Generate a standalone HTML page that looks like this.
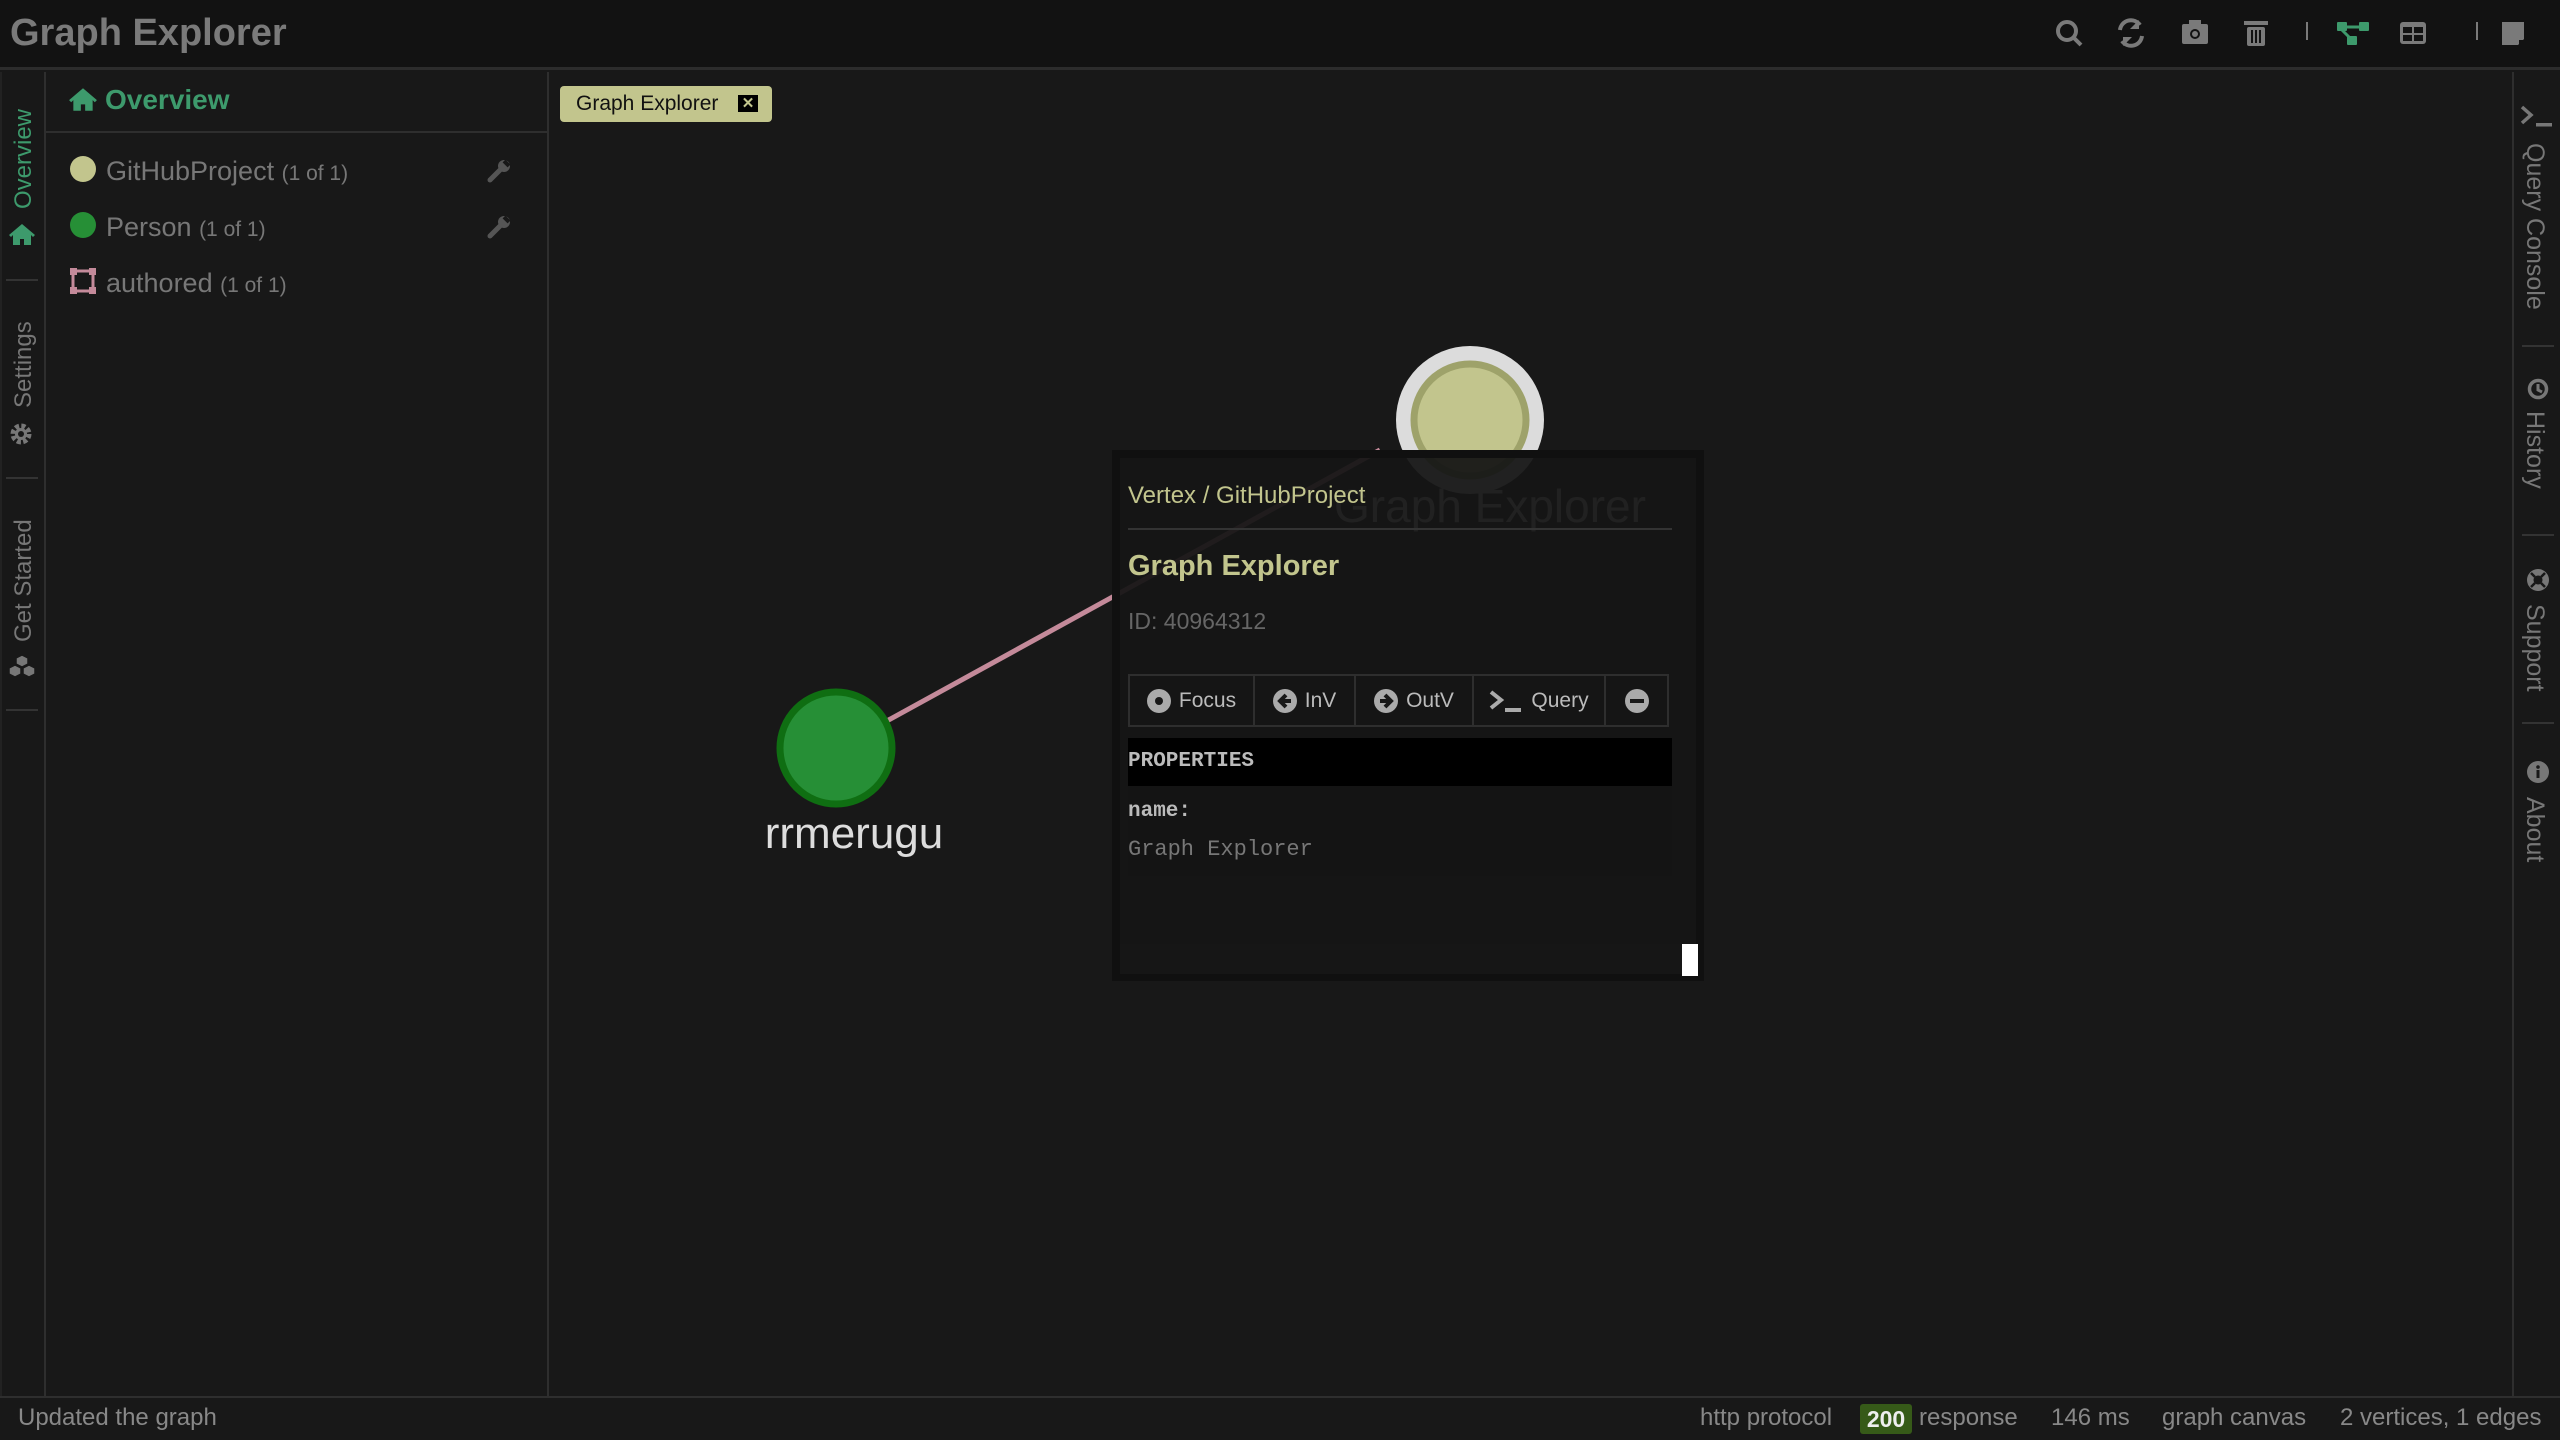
<!DOCTYPE html>
<html><head><meta charset="utf-8"><style>
*{margin:0;padding:0;box-sizing:border-box}
body{width:2560px;height:1440px;background:#181818;font-family:"Liberation Sans",sans-serif;position:relative;overflow:hidden;color:#888}
.a{position:absolute}
.vt{position:absolute;white-space:nowrap;font-size:24px;color:#777}
.vr{font-size:25px}
.btn{position:absolute;top:674px;height:53px;border:2px solid #2e2e2e;color:#bbb;font-size:21px;display:flex;align-items:center;justify-content:center;gap:8px}
.st{position:absolute;top:1404px;font-size:24px;color:#888;white-space:nowrap}
</style></head><body>
<!-- header -->
<div class="a" style="left:0;top:0;width:2560px;height:70px;background:#121212;border-bottom:3px solid #2c2c2c"></div>
<div class="a" style="left:10px;top:12px;font-size:38px;font-weight:bold;color:#7a7a7a">Graph Explorer</div>
<svg class="a" style="left:2050px;top:14px" width="500" height="40" viewBox="2050 14 500 40">
 <g fill="none" stroke="#7a7a7a" stroke-width="4"><circle cx="2067" cy="31" r="9"/><path d="M2074 38l7 7"/></g>
 <g fill="none" stroke="#7a7a7a" stroke-width="4"><path d="M2120 30a11 11 0 0 1 20-5"/><path d="M2142 36a11 11 0 0 1-20 5"/></g>
 <path d="M2139 20v9h-9z M2123 46v-9h9z" fill="#7a7a7a"/>
 <rect x="2182" y="24" width="26" height="20" rx="2" fill="#7a7a7a"/><rect x="2189" y="20" width="12" height="6" fill="#7a7a7a"/><circle cx="2195" cy="34" r="5" fill="#121212"/><circle cx="2195" cy="34" r="3" fill="#7a7a7a"/>
 <rect x="2244" y="21" width="24" height="4" fill="#7a7a7a"/><rect x="2247" y="27" width="18" height="19" rx="2" fill="#7a7a7a"/><path d="M2252 30v13M2256 30v13M2260 30v13" stroke="#121212" stroke-width="2"/>
 <rect x="2306" y="22" width="2" height="18" fill="#7a7a7a"/>
 <rect x="2337" y="22" width="10" height="9" rx="1" fill="#3d9a6c"/><rect x="2359" y="22" width="10" height="9" rx="1" fill="#3d9a6c"/><rect x="2347" y="36" width="10" height="9" rx="1" fill="#3d9a6c"/><path d="M2345 27h15M2342 30l8 8" stroke="#3d9a6c" stroke-width="3"/>
 <rect x="2400" y="22" width="26" height="22" rx="3" fill="#7a7a7a"/><rect x="2403" y="27" width="9" height="6" fill="#121212"/><rect x="2414" y="27" width="9" height="6" fill="#121212"/><rect x="2403" y="35" width="9" height="6" fill="#121212"/><rect x="2414" y="35" width="9" height="6" fill="#121212"/>
 <rect x="2476" y="22" width="2" height="18" fill="#7a7a7a"/>
 <path d="M2502 22h22v17l-6 6h-16z" fill="#7a7a7a"/><path d="M2524 40l-5 5v-5z" fill="#121212"/>
</svg>
<!-- left rail -->
<div class="a" style="left:0;top:72px;width:46px;height:1326px;background:#181818;border-right:2px solid #2e2e2e;border-left:2px solid #222"></div>
<div class="vt" style="left:10px;top:209px;transform:rotate(-90deg);transform-origin:0 0;color:#3d9a6c">Overview</div>
<svg class="a" style="left:8px;top:222px" width="28" height="24" viewBox="0 0 28 24"><path d="M14 2L1 13l2 2 2-2v10h7v-6h4v6h7V13l2 2 2-2z" fill="#3d9a6c"/></svg>
<div class="a" style="left:6px;top:279px;width:32px;height:2px;background:#333"></div>
<div class="vt" style="left:10px;top:408px;transform:rotate(-90deg);transform-origin:0 0">Settings</div>
<svg class="a" style="left:9px;top:422px" width="24" height="24" viewBox="0 0 24 24"><circle cx="12" cy="12" r="8" fill="none" stroke="#777" stroke-width="5" stroke-dasharray="4 2.3"/><circle cx="12" cy="12" r="6" fill="#777"/><circle cx="12" cy="12" r="3" fill="#181818"/></svg>
<div class="a" style="left:6px;top:477px;width:32px;height:2px;background:#333"></div>
<div class="vt" style="left:10px;top:642px;transform:rotate(-90deg);transform-origin:0 0">Get Started</div>
<svg class="a" style="left:8px;top:654px" width="28" height="24" viewBox="0 0 28 24"><g fill="#777" stroke="#181818" stroke-width="1.5"><path d="M14 1l6 3v6l-6 3-6-3V4z"/><path d="M7 11l6 3v6l-6 3-6-3v-6z"/><path d="M21 11l6 3v6l-6 3-6-3v-6z"/></g></svg>
<div class="a" style="left:6px;top:709px;width:32px;height:2px;background:#333"></div>
<!-- overview panel -->
<div class="a" style="left:46px;top:72px;width:503px;height:1326px;background:#181818;border-right:2px solid #2e2e2e"></div>
<div class="a" style="left:46px;top:131px;width:502px;height:2px;background:#2e2e2e"></div>
<svg class="a" style="left:68px;top:86px" width="30" height="26" viewBox="0 0 28 24"><path d="M14 2L1 13l2 2 2-2v10h7v-6h4v6h7V13l2 2 2-2z" fill="#3d9a6c"/></svg>
<div class="a" style="left:105px;top:84px;font-size:28px;font-weight:bold;color:#3d9a6c">Overview</div>
<div class="a" style="left:70px;top:156px;width:26px;height:26px;border-radius:50%;background:#c2c58d"></div>
<div class="a" style="left:106px;top:156px;font-size:27px;color:#777;white-space:nowrap">GitHubProject <span style="font-size:21px">(1 of 1)</span></div>
<div class="a" style="left:70px;top:212px;width:26px;height:26px;border-radius:50%;background:#268f36"></div>
<div class="a" style="left:106px;top:212px;font-size:27px;color:#777;white-space:nowrap">Person <span style="font-size:21px">(1 of 1)</span></div>
<svg class="a" style="left:70px;top:268px" width="26" height="26" viewBox="0 0 26 26"><rect x="3" y="3" width="20" height="20" fill="none" stroke="#c48a9a" stroke-width="3"/><g fill="#c48a9a"><rect x="0" y="0" width="7" height="7"/><rect x="19" y="0" width="7" height="7"/><rect x="0" y="19" width="7" height="7"/><rect x="19" y="19" width="7" height="7"/></g></svg>
<div class="a" style="left:106px;top:268px;font-size:27px;color:#777;white-space:nowrap">authored <span style="font-size:21px">(1 of 1)</span></div>
<svg class="a" style="left:486px;top:158px" width="26" height="26" viewBox="0 0 26 26"><path d="M4 22l11-11" stroke="#555" stroke-width="5" stroke-linecap="round"/><circle cx="18" cy="8" r="6" fill="#555"/><path d="M18 3l5 5" stroke="#181818" stroke-width="4"/></svg>
<svg class="a" style="left:486px;top:214px" width="26" height="26" viewBox="0 0 26 26"><path d="M4 22l11-11" stroke="#555" stroke-width="5" stroke-linecap="round"/><circle cx="18" cy="8" r="6" fill="#555"/><path d="M18 3l5 5" stroke="#181818" stroke-width="4"/></svg>
<!-- tab -->
<div class="a" style="left:560px;top:86px;width:212px;height:36px;background:#c2c58d;border-radius:4px"></div>
<div class="a" style="left:576px;top:92px;font-size:21px;color:#111">Graph Explorer</div>
<div class="a" style="left:738px;top:95px;width:20px;height:17px;background:#000;color:#c2c58d;font-size:15px;font-weight:bold;text-align:center;line-height:17px">✕</div>
<!-- graph -->
<svg class="a" style="left:0;top:0" width="2560" height="1440">
 <line x1="885" y1="722" x2="1380" y2="450" stroke="#c48a9a" stroke-width="5"/>
 <circle cx="836" cy="748" r="56" fill="#268f36" stroke="#0f6e12" stroke-width="7"/>
 <text x="854" y="848" font-family="Liberation Sans" font-size="44" fill="#ddd" text-anchor="middle">rrmerugu</text>
 <circle cx="1470" cy="420" r="74" fill="#dcdcdc"/>
 <circle cx="1470" cy="420" r="56" fill="#c2c58d" stroke="#9ea26a" stroke-width="7"/>
 <text x="1490" y="522" font-family="Liberation Sans" font-size="46" fill="#ddd" text-anchor="middle">Graph Explorer</text>
</svg>
<!-- popup -->
<div class="a" style="left:1112px;top:450px;width:592px;height:531px;background:rgba(21,21,21,0.94);border:8px solid rgba(16,16,16,0.95)"></div>
<div class="a" style="left:1128px;top:482px;font-size:24px;color:#c2c58d">Vertex / GitHubProject</div>
<div class="a" style="left:1128px;top:528px;width:544px;height:2px;background:#333"></div>
<div class="a" style="left:1128px;top:550px;font-size:29px;font-weight:bold;color:#c2c58d">Graph Explorer</div>
<div class="a" style="left:1128px;top:608px;font-size:23px;color:#666">ID: 40964312</div>
<div class="btn" style="left:1128px;width:127px"><svg width="24" height="24"><circle cx="12" cy="12" r="12" fill="#aaa"/><circle cx="12" cy="12" r="4" fill="#181818"/></svg>Focus</div>
<div class="btn" style="left:1253px;width:103px"><svg width="24" height="24"><circle cx="12" cy="12" r="12" fill="#aaa"/><path d="M13 6l-6 6 6 6M7 12h11" stroke="#181818" stroke-width="4" fill="none"/></svg>InV</div>
<div class="btn" style="left:1354px;width:120px"><svg width="24" height="24"><circle cx="12" cy="12" r="12" fill="#aaa"/><path d="M11 6l6 6-6 6M17 12H6" stroke="#181818" stroke-width="4" fill="none"/></svg>OutV</div>
<div class="btn" style="left:1472px;width:134px"><svg width="34" height="24"><path d="M2 3l10 8-10 8" stroke="#aaa" stroke-width="4" fill="none"/><rect x="16" y="19" width="16" height="4" fill="#aaa"/></svg>Query</div>
<div class="btn" style="left:1604px;width:65px"><svg width="24" height="24"><circle cx="12" cy="12" r="12" fill="#aaa"/><rect x="5" y="10" width="14" height="4" fill="#181818"/></svg></div>
<div class="a" style="left:1128px;top:738px;width:544px;height:48px;background:#000"></div>
<div class="a" style="left:1128px;top:750px;font-family:'Liberation Mono',monospace;font-weight:bold;font-size:21px;color:#bbb">PROPERTIES</div>
<div class="a" style="left:1128px;top:786px;width:544px;height:90px;background:#141414"></div>
<div class="a" style="left:1128px;top:800px;font-family:'Liberation Mono',monospace;font-weight:bold;font-size:21px;color:#bbb">name:</div>
<div class="a" style="left:1128px;top:837px;font-family:'Liberation Mono',monospace;font-size:22px;color:#777">Graph Explorer</div>
<div class="a" style="left:1120px;top:944px;width:576px;height:30px;background:#161616"></div>
<div class="a" style="left:1682px;top:944px;width:16px;height:32px;background:#fff"></div>
<!-- right rail -->
<div class="a" style="left:2512px;top:72px;width:48px;height:1326px;background:#181818;border-left:2px solid #2e2e2e"></div>
<svg class="a" style="left:2520px;top:104px" width="34" height="24"><path d="M2 3l9 8-9 8" stroke="#777" stroke-width="3.5" fill="none"/><rect x="16" y="19" width="16" height="3.5" fill="#777"/></svg>
<div class="vt vr" style="left:2549px;top:143px;transform:rotate(90deg);transform-origin:0 0">Query Console</div>
<div class="a" style="left:2522px;top:345px;width:32px;height:2px;background:#333"></div>
<svg class="a" style="left:2526px;top:377px" width="24" height="24"><circle cx="12" cy="12" r="8.5" fill="none" stroke="#777" stroke-width="3.5"/><path d="M12 7v6l4 2" stroke="#777" stroke-width="3" fill="none"/></svg>
<div class="vt vr" style="left:2549px;top:411px;transform:rotate(90deg);transform-origin:0 0">History</div>
<div class="a" style="left:2522px;top:534px;width:32px;height:2px;background:#333"></div>
<svg class="a" style="left:2526px;top:568px" width="24" height="24"><circle cx="12" cy="12" r="11" fill="#777"/><circle cx="12" cy="12" r="4.5" fill="#181818"/><path d="M5 5l4 4M19 5l-4 4M5 19l4-4M19 19l-4-4" stroke="#181818" stroke-width="2.5"/></svg>
<div class="vt vr" style="left:2549px;top:604px;transform:rotate(90deg);transform-origin:0 0">Support</div>
<div class="a" style="left:2522px;top:722px;width:32px;height:2px;background:#333"></div>
<svg class="a" style="left:2526px;top:760px" width="24" height="24"><circle cx="12" cy="12" r="11" fill="#777"/><rect x="10.5" y="10" width="3" height="8" fill="#181818"/><circle cx="12" cy="7" r="1.8" fill="#181818"/></svg>
<div class="vt vr" style="left:2549px;top:797px;transform:rotate(90deg);transform-origin:0 0">About</div>
<!-- status -->
<div class="a" style="left:0;top:1396px;width:2560px;height:44px;background:#181818;border-top:2px solid #2e2e2e"></div>
<div class="st" style="left:18px">Updated the graph</div>
<div class="st" style="left:1700px">http protocol</div>
<div class="a" style="left:1860px;top:1404px;width:52px;height:30px;background:#365a18;border-radius:3px;color:#eee;font-weight:bold;font-size:23px;text-align:center;line-height:30px">200</div>
<div class="st" style="left:1919px">response</div>
<div class="st" style="left:2051px">146 ms</div>
<div class="st" style="left:2162px">graph canvas</div>
<div class="st" style="left:2340px">2 vertices, 1 edges</div>
</body></html>
